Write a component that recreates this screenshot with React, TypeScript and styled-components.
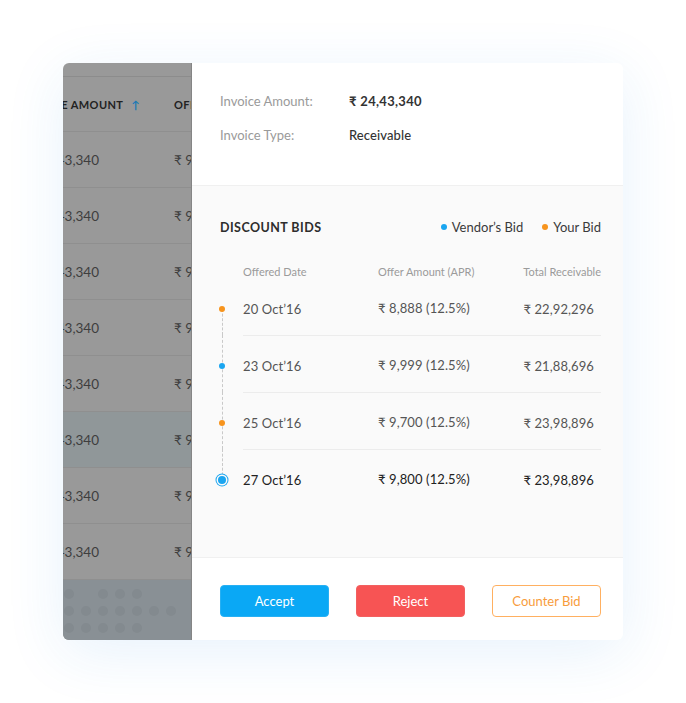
import React from "react";
import styled, { createGlobalStyle } from "styled-components";

const Global = createGlobalStyle`
  html, body { margin: 0; padding: 0; background: #ffffff; }
  body { font-family: Lato, "Open Sans", sans-serif; -webkit-font-smoothing: antialiased; }
`;

const Page = styled.div`
  display: flex;
  padding: 63px;
  width: 686px;
  height: 703px;
  box-sizing: border-box;
`;

const Card = styled.div`
  display: flex;
  width: 560px;
  height: 577px;
  border-radius: 6px;
  overflow: hidden;
  background: #fff;
  box-shadow: 0 12px 60px rgba(40, 140, 230, 0.11);
`;

/* ---------- Left dimmed table ---------- */
const LeftPanel = styled.div`
  width: 129px;
  flex: none;
  display: flex;
  flex-direction: column;
  background: #999999;
  border-right: 1px solid #858585;
  box-sizing: border-box;
  overflow: hidden;
`;

const TopStrip = styled.div`
  height: 13px;
  flex: none;
  border-bottom: 1px solid #8c8c8c;
`;

const TRow = styled.div<{ $h: number; $hl?: boolean }>`
  height: ${(p) => p.$h}px;
  flex: none;
  display: flex;
  align-items: center;
  box-sizing: border-box;
  border-bottom: 1px solid #8f8f8f;
  background: ${(p) => (p.$hl ? "#909799" : "transparent")};
  white-space: nowrap;
`;

const FirstCell = styled.div<{ $trail: number; $head?: boolean }>`
  width: 111px;
  flex: none;
  display: flex;
  justify-content: flex-end;
  align-items: center;
  overflow: hidden;
  box-sizing: border-box;
  padding-right: ${(p) => p.$trail}px;
  font-size: ${(p) => (p.$head ? "11px" : "13.5px")};
  font-weight: ${(p) => (p.$head ? 700 : 400)};
  letter-spacing: ${(p) => (p.$head ? "0.4px" : "0")};
  color: ${(p) => (p.$head ? "#222" : "#3e3e3e")};
`;

const NextCell = styled.div<{ $head?: boolean }>`
  flex: none;
  font-size: ${(p) => (p.$head ? "11px" : "13.5px")};
  font-weight: ${(p) => (p.$head ? 700 : 400)};
  letter-spacing: ${(p) => (p.$head ? "0.4px" : "0")};
  color: ${(p) => (p.$head ? "#222" : "#3e3e3e")};
`;

const SortArrow = styled.span`
  color: #1b79b5;
  margin-left: 8px;
  font-size: 11px;
`;

const DotArea = styled.div`
  flex: 1;
  background: #899095;
  display: flex;
  flex-direction: column;
  gap: 7px;
  padding: 9px 0 0 0;
`;

const DotRow = styled.div`
  display: flex;
  gap: 7px;
  margin-left: 1px;
`;

const Dot = styled.span<{ $on: boolean }>`
  width: 10px;
  height: 10px;
  border-radius: 50%;
  background: ${(p) => (p.$on ? "#838a8f" : "transparent")};
  flex: none;
`;

/* ---------- Right detail panel ---------- */
const RightPanel = styled.div`
  flex: 1;
  display: flex;
  flex-direction: column;
  color: #333;
`;

const InfoSection = styled.div`
  height: 123px;
  box-sizing: border-box;
  padding: 28px 22px 0 28px;
  display: flex;
  flex-direction: column;
  gap: 14px;
  border-bottom: 1px solid #f0f0f0;
`;

const InfoRow = styled.div`
  display: flex;
  align-items: center;
  height: 20px;
  font-size: 13px;
`;

const InfoLabel = styled.span`
  width: 129px;
  color: #9a9a9a;
`;

const InfoValue = styled.span<{ $strong?: boolean }>`
  color: #333;
  font-weight: ${(p) => (p.$strong ? 700 : 500)};
  letter-spacing: ${(p) => (p.$strong ? "0.3px" : "0.1px")};
`;

const BidsSection = styled.div`
  flex: 1;
  background: #fafafa;
  border-bottom: 1px solid #f0f0f0;
  padding: 32px 22px 0 28px;
  display: flex;
  flex-direction: column;
`;

const TitleRow = styled.div`
  display: flex;
  justify-content: space-between;
  align-items: center;
  height: 18px;
`;

const Title = styled.div`
  font-size: 12.5px;
  font-weight: 700;
  letter-spacing: 0.45px;
  color: #2d2d2d;
`;

const Legend = styled.div`
  display: flex;
  gap: 19px;
  font-size: 13px;
  color: #3a3a3a;
`;

const LegendItem = styled.div`
  display: flex;
  align-items: center;
  gap: 5px;
`;

const LegendDot = styled.span<{ $c: string }>`
  width: 6px;
  height: 6px;
  border-radius: 50%;
  background: ${(p) => p.$c};
`;

const Grid = styled.div`
  display: grid;
  grid-template-columns: 135px 1fr auto;
  align-items: center;
`;

const HeadGrid = styled(Grid)`
  margin: 28px 0 0 23px;
  height: 14px;
  font-size: 11px;
  color: #9b9b9b;
`;

const HeadRight = styled.span`
  text-align: right;
`;

const BidRow = styled.div`
  display: flex;
  height: 57px;
  margin-left: -4px;
`;

const Marker = styled.div<{ $first?: boolean; $last?: boolean }>`
  position: relative;
  width: 12px;
  flex: none;
  margin-right: 15px;
  &::before {
    content: "";
    position: absolute;
    left: 5.5px;
    top: ${(p) => (p.$first ? "31px" : "0")};
    height: ${(p) => (p.$first ? "26px" : p.$last ? "31px" : "57px")};
    border-left: 1px dashed #c9c9c9;
  }
`;

const MarkerDot = styled.span<{ $c: string; $ring?: boolean }>`
  position: absolute;
  z-index: 1;
  left: ${(p) => (p.$ring ? "2px" : "3px")};
  top: ${(p) => (p.$ring ? "27px" : "28px")};
  width: ${(p) => (p.$ring ? "8px" : "6px")};
  height: ${(p) => (p.$ring ? "8px" : "6px")};
  border-radius: 50%;
  background: ${(p) => p.$c};
  box-shadow: ${(p) => (p.$ring ? "0 0 0 1.5px #fafafa, 0 0 0 2.5px #1aa5f0" : "none")};
`;

const BidBody = styled(Grid)<{ $first?: boolean; $active?: boolean }>`
  flex: 1;
  border-top: 1px solid ${(p) => (p.$first ? "transparent" : "#ececec")};
  align-items: start;
  padding-top: 20px;
  box-sizing: border-box;
  font-size: 13px;
  line-height: 20px;
  color: ${(p) => (p.$active ? "#222" : "#555")};
  font-weight: 400;
  letter-spacing: 0.1px;
`;

const Amount = styled.span`
  margin-top: -1px;
`;

const Total = styled.span`
  text-align: right;
  padding-right: 7px;
`;

const Footer = styled.div`
  height: 82px;
  flex: none;
  box-sizing: border-box;
  padding: 27px 22px 0 28px;
  display: flex;
  justify-content: space-between;
  align-items: flex-start;
`;

const Button = styled.button<{ $kind: "accept" | "reject" | "counter" }>`
  width: 109px;
  height: 32px;
  border-radius: 4px;
  font-family: inherit;
  font-size: 13px;
  cursor: pointer;
  border: 1px solid
    ${(p) => (p.$kind === "accept" ? "#27b0f3" : p.$kind === "reject" ? "#f26060" : "#ffb061")};
  background: ${(p) => (p.$kind === "accept" ? "#0aa8f5" : p.$kind === "reject" ? "#f75454" : "#fff")};
  color: ${(p) => (p.$kind === "counter" ? "#f89c3c" : "#fff")};
`;

const leftRows = [false, false, false, false, false, true, false, false];

const dotPattern = [
  [1, 0, 1, 1, 1, 0, 0],
  [1, 1, 1, 1, 1, 1, 1],
  [1, 1, 1, 1, 1, 0, 0],
];

const bids = [
  { date: "20 Oct’16", amt: "₹ 8,888 (12.5%)", total: "₹ 22,92,296", c: "#f7941d" },
  { date: "23 Oct’16", amt: "₹ 9,999 (12.5%)", total: "₹ 21,88,696", c: "#1aa5f0" },
  { date: "25 Oct’16", amt: "₹ 9,700 (12.5%)", total: "₹ 23,98,896", c: "#f7941d" },
  { date: "27 Oct’16", amt: "₹ 9,800 (12.5%)", total: "₹ 23,98,896", c: "#1aa5f0" },
];

export default function App() {
  return (
    <>
      <Global />
      <Page>
        <Card>
          <LeftPanel>
            <TopStrip />
            <TRow $h={55}>
              <FirstCell $head $trail={34}>
                INVOICE AMOUNT<SortArrow>↑</SortArrow>
              </FirstCell>
              <NextCell $head>OFFER AMOUNT</NextCell>
            </TRow>
            {leftRows.map((hl, i) => (
              <TRow key={i} $h={56} $hl={hl}>
                <FirstCell $trail={75}>₹ 24,43,340</FirstCell>
                <NextCell>₹ 9,800</NextCell>
              </TRow>
            ))}
            <DotArea>
              {dotPattern.map((row, i) => (
                <DotRow key={i}>
                  {row.map((d, j) => (
                    <Dot key={j} $on={d === 1} />
                  ))}
                </DotRow>
              ))}
            </DotArea>
          </LeftPanel>

          <RightPanel>
            <InfoSection>
              <InfoRow>
                <InfoLabel>Invoice Amount:</InfoLabel>
                <InfoValue $strong>₹ 24,43,340</InfoValue>
              </InfoRow>
              <InfoRow>
                <InfoLabel>Invoice Type:</InfoLabel>
                <InfoValue>Receivable</InfoValue>
              </InfoRow>
            </InfoSection>

            <BidsSection>
              <TitleRow>
                <Title>DISCOUNT BIDS</Title>
                <Legend>
                  <LegendItem>
                    <LegendDot $c="#1aa5f0" />
                    Vendor’s Bid
                  </LegendItem>
                  <LegendItem>
                    <LegendDot $c="#f7941d" />
                    Your Bid
                  </LegendItem>
                </Legend>
              </TitleRow>
              <HeadGrid>
                <span>Offered Date</span>
                <span>Offer Amount (APR)</span>
                <HeadRight>Total Receivable</HeadRight>
              </HeadGrid>
              {bids.map((b, i) => {
                const first = i === 0;
                const last = i === bids.length - 1;
                return (
                  <BidRow key={i}>
                    <Marker $first={first} $last={last}>
                      <MarkerDot $c={b.c} $ring={last} />
                    </Marker>
                    <BidBody $first={first} $active={last}>
                      <span>{b.date}</span>
                      <Amount>{b.amt}</Amount>
                      <Total>{b.total}</Total>
                    </BidBody>
                  </BidRow>
                );
              })}
            </BidsSection>

            <Footer>
              <Button $kind="accept">Accept</Button>
              <Button $kind="reject">Reject</Button>
              <Button $kind="counter">Counter Bid</Button>
            </Footer>
          </RightPanel>
        </Card>
      </Page>
    </>
  );
}
